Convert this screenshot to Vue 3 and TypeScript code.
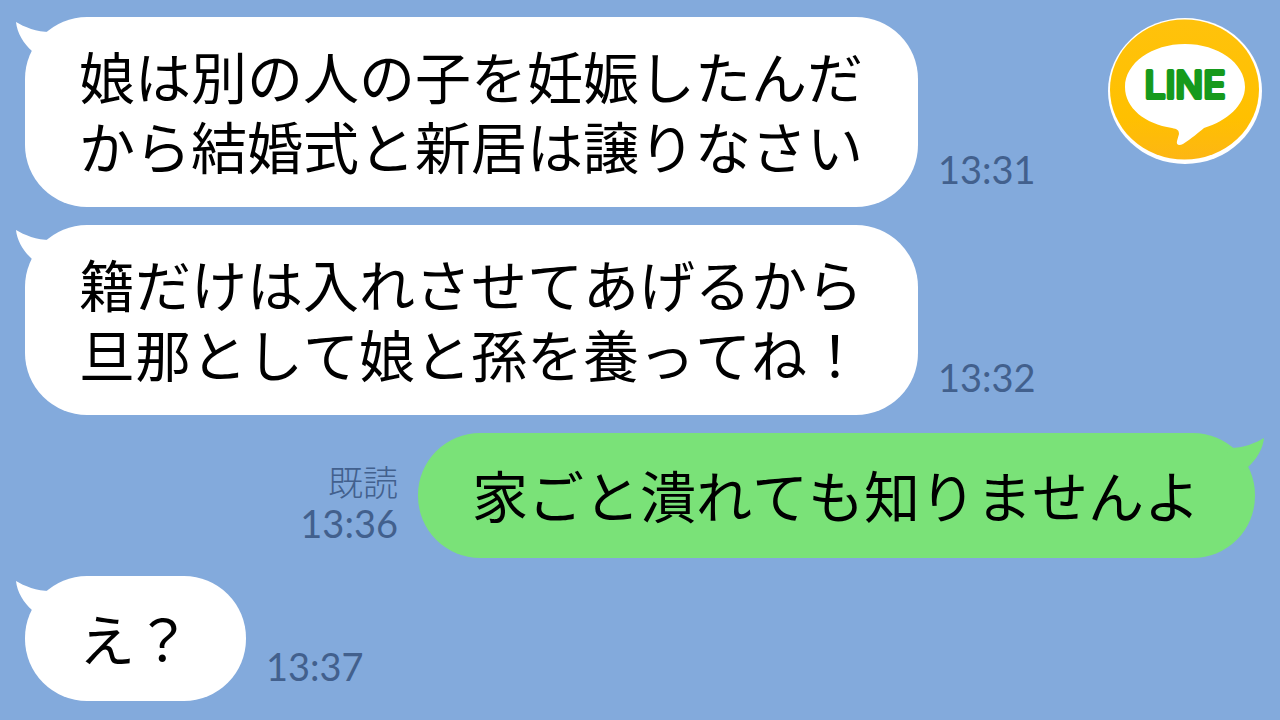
<script setup lang="ts">
interface Message {
  id: number
  own: boolean
  lines: string[]
  time: string
  read?: boolean
}

const messages: Message[] = [
  { id: 1, own: false, lines: ['娘は別の人の子を妊娠したんだ', 'から結婚式と新居は譲りなさい'], time: '13:31' },
  { id: 2, own: false, lines: ['籍だけは入れさせてあげるから', '旦那として娘と孫を養ってね！'], time: '13:32' },
  { id: 3, own: true, lines: ['家ごと潰れても知りませんよ'], time: '13:36', read: true },
  { id: 4, own: false, lines: ['え？'], time: '13:37' },
]
</script>

<template>
  <main class="chat">
    <svg class="logo" viewBox="0 0 156 148" role="img" aria-label="LINE">
      <defs>
        <linearGradient id="gold" x1="0" y1="0" x2="0" y2="1">
          <stop offset="0" stop-color="#ffc20c" />
          <stop offset="0.7" stop-color="#ffc000" />
          <stop offset="1" stop-color="#fdb614" />
        </linearGradient>
      </defs>
      <ellipse cx="78" cy="74" rx="77" ry="73" fill="#fff" />
      <ellipse cx="77.500" cy="72.500" rx="74.500" ry="70" fill="url(#gold)" />
      <path
        fill="#fff"
        d="M78 27C111 27 138 46 138 70C138 88 120 104 97 111C92 115 84 122 76 127C72 129 69 128 70 124L72 117C72 113 70 112 65 111C38 107 18 91 18 70C18 46 45 27 78 27Z"
      />
      <text class="wordmark" x="78" y="81" text-anchor="middle">LINE</text>
    </svg>

    <ol class="messages">
      <li
        v-for="m in messages"
        :key="m.id"
        class="message"
        :class="{ own: m.own, tall: m.lines.length > 1 }"
      >
        <div class="bubble">
          <svg class="tail" viewBox="0 0 40 36" aria-hidden="true">
            <path d="M0 0C8 5 21 10 34 10L40 20L26 36L16 29C8 22 1 11 0 0Z" />
          </svg>
          <p class="text">
            <span v-for="line in m.lines" :key="line" class="line">{{ line }}</span>
          </p>
        </div>
        <div class="meta">
          <span v-if="m.read" class="read">既読</span>
          <time>{{ m.time }}</time>
        </div>
      </li>
    </ol>
  </main>
</template>

<style>
body {
  margin: 0;
  background: #83aadc;
}
</style>

<style scoped>
.chat {
  position: relative;
  box-sizing: border-box;
  min-height: 100vh;
  padding: 17px 25px 19px;
  background: #83aadc;
  font-family: "Noto Sans CJK JP", sans-serif;
}

.logo {
  position: absolute;
  top: 17px;
  right: 17px;
  width: 156px;
  height: 148px;
}

.wordmark {
  font-family: Inter, sans-serif;
  font-size: 37px;
  font-weight: 400;
  fill: #169a1c;
  stroke: #169a1c;
  stroke-width: 4px;
  stroke-linejoin: round;
}

.messages {
  display: flex;
  flex-direction: column;
  gap: 18px;
  margin: 0;
  padding: 0;
  list-style: none;
}

.message {
  display: flex;
  align-items: flex-end;
  gap: 20px;
}

.message.own {
  flex-direction: row-reverse;
}

.bubble {
  position: relative;
  display: flex;
  align-items: center;
  box-sizing: border-box;
  min-height: 125px;
  padding: 23px 55px 27px 54px;
  border-radius: 62px;
  background: #fff;
}

.own .bubble {
  background: #7ae278;
}

.tail {
  position: absolute;
  top: 5px;
  left: -9px;
  width: 40px;
  height: 36px;
  fill: #fff;
}

.own .tail {
  right: -9px;
  left: auto;
  fill: #7ae278;
  transform: scaleX(-1);
}

.text {
  margin: 0;
  color: #000;
  font-size: 56px;
  font-weight: 400;
  font-kerning: none;
  line-height: 70px;
}

.line {
  display: block;
  white-space: nowrap;
}

.meta {
  display: flex;
  flex-direction: column;
  align-items: flex-end;
  padding-bottom: 14px;
  color: #42608d;
  font-size: 35px;
  line-height: 42px;
}

.tall .meta {
  padding-bottom: 17px;
}

.read {
  font-weight: 300;
}

time {
  font-family: Lato, sans-serif;
  font-size: 38px;
  font-weight: 400;
}
</style>
